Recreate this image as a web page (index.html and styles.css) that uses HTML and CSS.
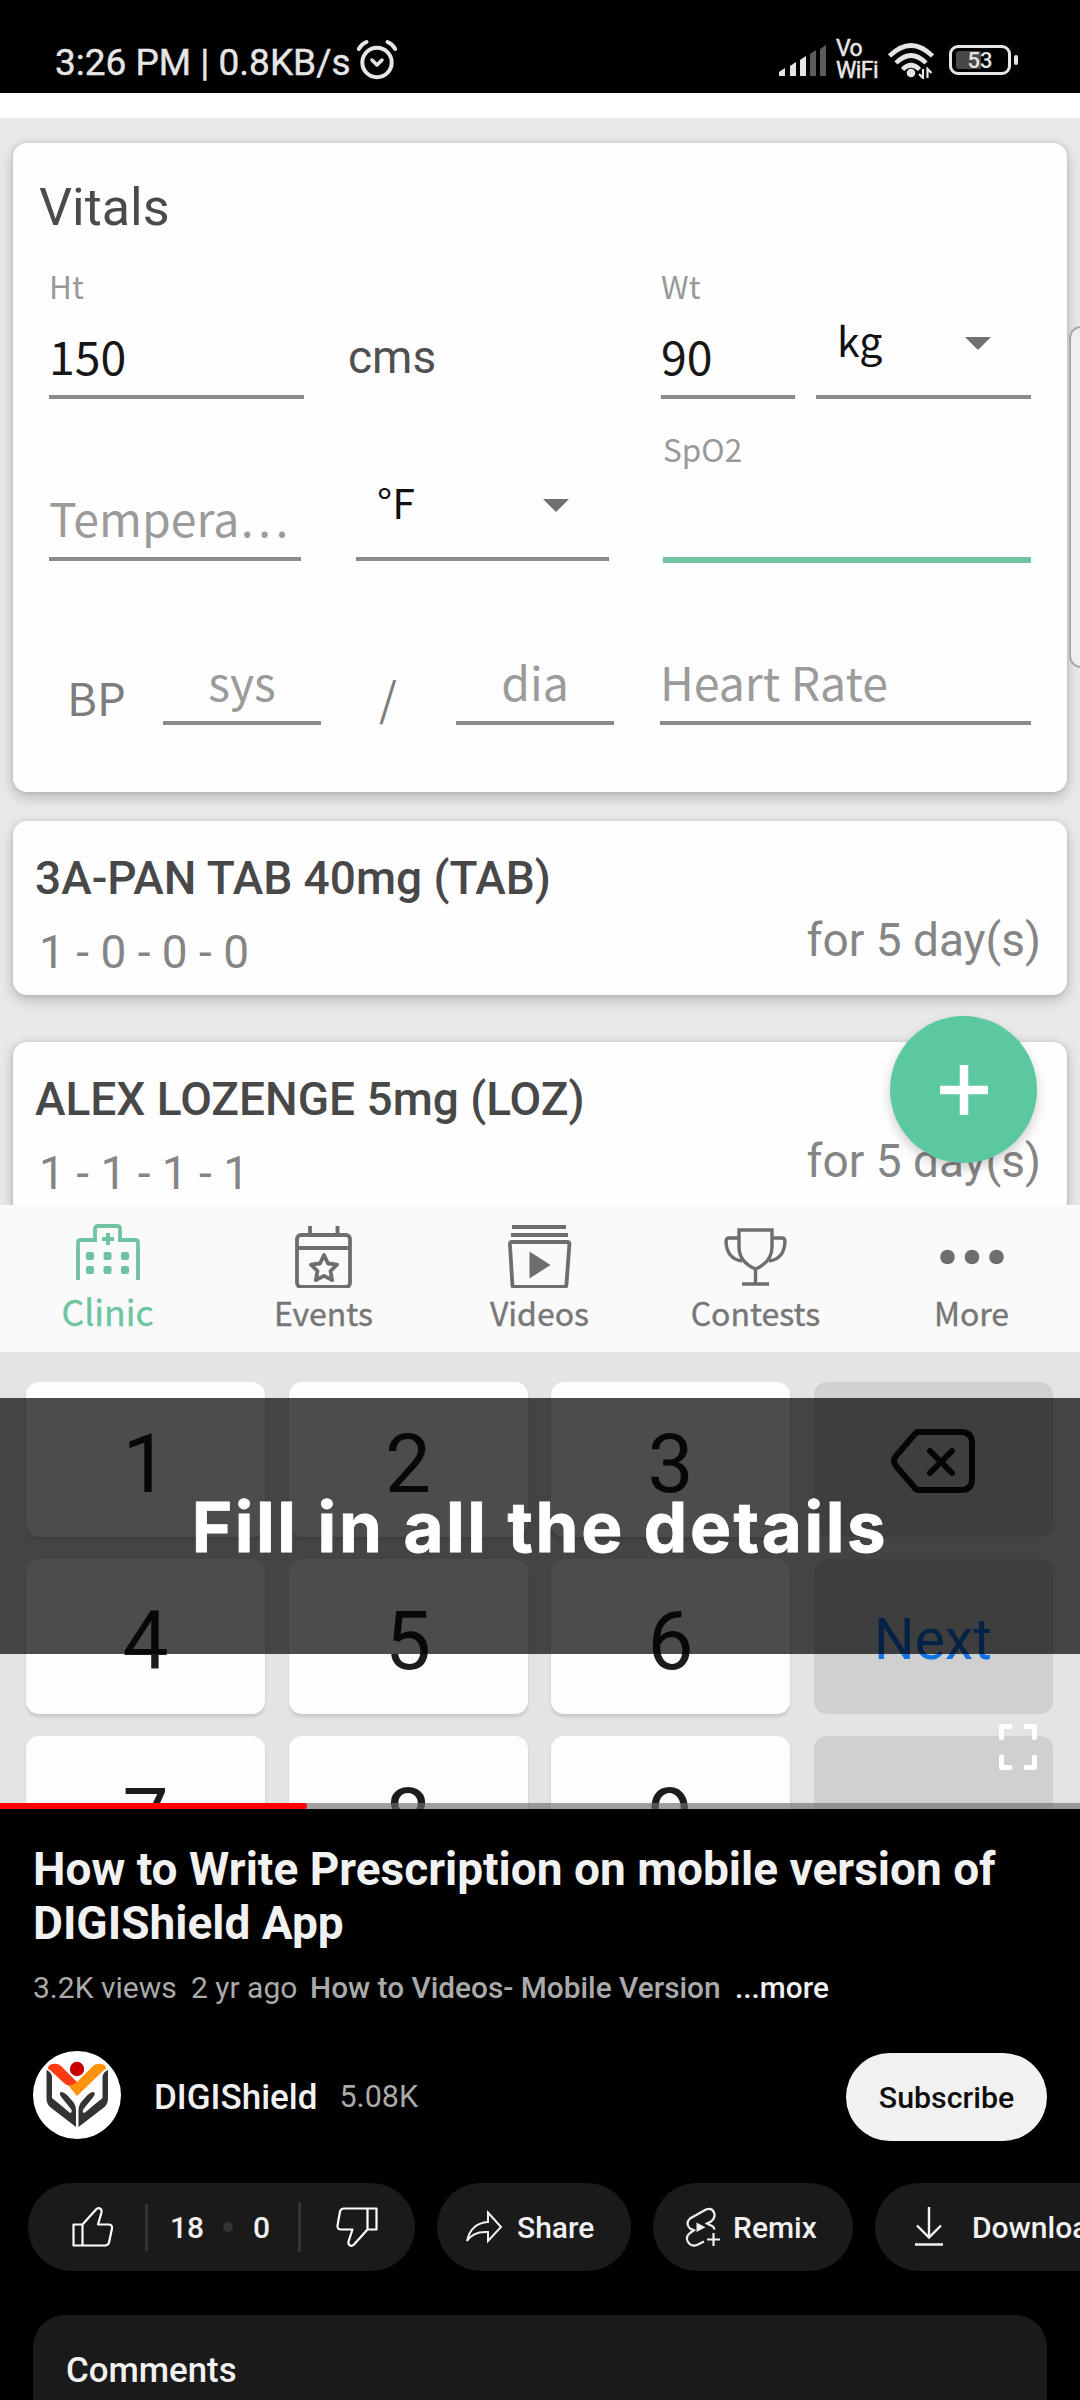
FILE: index.html
```
<!DOCTYPE html>
<html lang="en">
<head>
<meta charset="utf-8">
<title>How to Write Prescription on mobile version of DIGIShield App</title>
<link rel="stylesheet" href="styles.css">
</head>
<body>
<header class="status">
  <span class="status-text">3:26 PM | 0.8KB/s</span>
  <svg class="alarm" width="42" height="42" viewBox="0 0 42 42" fill="none" stroke="#e6e6e6" stroke-linecap="round">
    <circle cx="21" cy="23.500" r="14.700" stroke-width="4"/>
    <path d="M2.800 10Q5.500 5 10.500 3M39.200 10Q36.500 5 31.500 3" stroke-width="4"/>
    <path d="M16 21l5 5 5-5" stroke-width="3.500" stroke-linejoin="round"/>
  </svg>
  <span class="spacer"></span>
  <svg class="signal" width="48" height="32" viewBox="0 0 48 32">
    <g fill="#e6e6e6"><path d="M0 31v-4l6-4v8zM11 31V21l6-4v14zM21 31V15l6-4v20z"/></g>
    <g fill="#5c5c5c"><path d="M31 31V9l6-4v26zM41 31V4l6-4v31z"/></g>
  </svg>
  <span class="vowifi"><span>Vo</span><span>WiFi</span></span>
  <svg class="wifi" width="46" height="36" viewBox="0 0 46 36">
    <g fill="none" stroke="#e6e6e6" stroke-width="4.500"><path d="M1.500 13Q23-8 44.500 13M8 20Q23 5 38 20M14.500 26.500Q23 18 31.500 26.500"/></g>
    <circle cx="23" cy="30" r="4.300" fill="#e6e6e6"/>
    <path d="M35 26v9l-4-4M39.500 35v-9l4 4" fill="none" stroke="#e6e6e6" stroke-width="2.200"/>
  </svg>
  <span class="battery"><span class="battery-level"></span><span class="battery-text">53</span></span>
  <span class="battery-tip"></span>
</header>

<main class="video">
  <div class="screen">
    <section class="card vitals">
      <h2>Vitals</h2>
      <div class="row row-size">
        <div class="field"><label>Ht</label><b>150</b></div>
        <div class="unit">cms</div>
        <div class="field"><label>Wt</label><b>90</b></div>
        <div class="select kg"><span>kg</span><i></i></div>
      </div>
      <div class="row row-temp">
        <div class="field hint"><b>Tempera…</b></div>
        <div class="select"><span>°F</span><i></i></div>
        <div class="field active"><label>SpO2</label><b></b></div>
      </div>
      <div class="row row-bp">
        <div class="bp">BP</div>
        <div class="field hint center"><b>sys</b></div>
        <div class="bp slash">/</div>
        <div class="field hint center"><b>dia</b></div>
        <div class="field hint"><b>Heart Rate</b></div>
      </div>
    </section>
    <section class="card drug">
      <h3>3A-PAN TAB 40mg (TAB)</h3>
      <div class="dose"><span>1 - 0 - 0 - 0</span><span class="days">for 5 day(s)</span></div>
    </section>
    <section class="card drug second">
      <h3>ALEX LOZENGE 5mg (LOZ)</h3>
      <div class="dose"><span>1 - 1 - 1 - 1</span><span class="days">for 5 day(s)</span></div>
    </section>
    <div class="scroll-handle"></div>
    <div class="fab"><svg width="48" height="50" viewBox="0 0 48 50"><path d="M24 0v50M0 25h48" stroke="#fff" stroke-width="8.500"/></svg></div>
  </div>

  <nav class="tabs">
    <div class="tab on">
      <svg width="64" height="64" viewBox="0 0 64 64" fill="none" stroke="#70c3a0" stroke-width="3.800">
        <path d="M2 56V19q0-3 3-3h14V5q0-3 3-3h19q3 0 3 3v11h15q3 0 3 3v37"/>
        <path d="M32 9v12M26 15h12" stroke-width="4"/>
        <g fill="#70c3a0" stroke="none"><rect x="10" y="28" width="8" height="8" rx="2"/><rect x="27.500" y="28" width="8" height="8" rx="2"/><rect x="45" y="28" width="8" height="8" rx="2"/><rect x="10" y="42" width="8" height="8" rx="2"/><rect x="27.500" y="42" width="8" height="8" rx="2"/><rect x="45" y="42" width="8" height="8" rx="2"/></g>
      </svg><span>Clinic</span>
    </div>
    <div class="tab">
      <svg width="64" height="64" viewBox="0 0 64 64" fill="none" stroke="#6e6e6e" stroke-width="3.800" stroke-linejoin="round">
        <rect x="5" y="11" width="53" height="52" rx="4"/><path d="M5 24h53M18 2v9M45.500 2v9"/>
        <path d="M32 31l4 8.500 9 1.200-6.500 6.300 1.600 9.200-8.100-4.400-8.100 4.400 1.600-9.200-6.500-6.300 9-1.200z"/>
      </svg><span>Events</span>
    </div>
    <div class="tab">
      <svg width="64" height="64" viewBox="0 0 64 64" fill="none" stroke="#6e6e6e" stroke-width="3.800" stroke-linejoin="round">
        <path d="M4 3h54M3 11h57"/><path d="M1.900 20q0-2 2-2h55.500q2 0 2 2l-3 41q0 2-2 2h-50q-2 0-2-2z"/>
        <path d="M21.500 27.500v27l21-13.500z" fill="#6e6e6e" stroke="none"/>
      </svg><span>Videos</span>
    </div>
    <div class="tab">
      <svg width="66" height="64" viewBox="0 0 66 64" fill="none" stroke="#6e6e6e" stroke-width="3.400">
        <path d="M16 6h33v17q0 15-16.500 22Q16 38 16 23zM32.500 45v14M19 60h27"/>
        <path d="M16 14H6q-3 0-3 4 1 17 16 19M49 14h10q3 0 3 4-1 17-16 19"/>
      </svg><span>Contests</span>
    </div>
    <div class="tab">
      <svg width="64" height="64" viewBox="0 0 64 64" fill="#6e6e6e"><circle cx="7.500" cy="33" r="7.300"/><circle cx="32" cy="33" r="7.300"/><circle cx="56.500" cy="33" r="7.300"/></svg><span>More</span>
    </div>
  </nav>

  <div class="keyboard">
    <div class="key">1</div><div class="key">2</div><div class="key">3</div>
    <div class="key alt"><svg width="86" height="66" viewBox="0 0 86 66" fill="none" stroke="#111" stroke-width="6" stroke-linecap="round" stroke-linejoin="round"><path d="M29 4h42q11 0 11 11v36q0 11-11 11H29q-3 0-5-3L6 38q-4-5 0-10L24 7q2-3 5-3z"/><path d="M40 23l22 22M62 23L40 45"/></svg></div>
    <div class="key">4</div><div class="key">5</div><div class="key">6</div><div class="key alt next">Next</div>
    <div class="key">7</div><div class="key">8</div><div class="key">9</div><div class="key alt"></div>
  </div>

  <div class="caption">Fill in all the details</div>
  <svg class="fullscreen" width="40" height="48" viewBox="0 0 40 48" fill="none" stroke="#fff" stroke-width="5" stroke-linejoin="round" stroke-linecap="round"><path d="M3.500 14.500V3.500H12M28 3.500h8.500v11M36.500 34v10.500H28M12 44.500H3.500V34"/></svg>
  <div class="progress"><div class="played"></div></div>
</main>

<section class="info">
  <h1>How to Write Prescription on mobile version of DIGIShield App</h1>
  <div class="meta"><span class="views">3.2K views</span><span class="age">2 yr ago</span><strong>How to Videos- Mobile Version</strong><em>...more</em></div>
  <div class="channel">
    <svg class="avatar" width="88" height="88" viewBox="0 0 88 88">
      <circle cx="44" cy="44" r="44" fill="#fff"/>
      <circle cx="44" cy="18" r="7.200" fill="#c90000"/>
      <path d="M15 18q0-4 4-5 6-1 9 2l16 16-4 3q-5 2-9-2L17 19z" fill="#ff3a12"/>
      <path d="M73 18q0-4-4-5-6-1-9 2L44 31q-4 4-9 3l9 11 27-26z" fill="#ff930f"/>
      <path id="hand" d="M13.500 19q5 2 5.500 7v21l11 9 7 6q3-1 1-4l-9-11q-4-5-1-6 3 0 7 4l6 7q2 3 2 8v16L17 56q-3.500-3-3.500-9z" fill="#333"/>
      <use href="#hand" transform="translate(88.500 0) scale(-1 1)"/>
    </svg>
    <span class="name">DIGIShield</span><span class="subs">5.08K</span>
    <span class="spacer"></span>
    <button class="subscribe">Subscribe</button>
  </div>
  <div class="actions">
    <div class="pill votes">
      <svg class="up" width="42" height="42" viewBox="0 0 42 42" fill="none" stroke="#fff" stroke-width="2.200" stroke-linejoin="round"><path d="M1.500 18.500h9v21h-9zM10.500 18.500L24 3.500q2-2 4-1t1.500 4L26 18.500h10.500q4 0 3.500 4l-3 14q-.8 3-4 3H10.500"/></svg>
      <i class="bar"></i><span class="count">18</span><i class="dot"></i><span class="count">0</span><i class="bar tall"></i>
      <svg class="down" width="42" height="42" viewBox="0 0 42 42" fill="none" stroke="#fff" stroke-width="2.200" stroke-linejoin="round"><path d="M40.500 23.500h-9v-21h9zM31.500 23.500L18 38.500q-2 2-4 1t-1.500-4l4-12H5q-4 0-3.500-4l2.500-14q.8-3 4-3h23.500"/></svg>
    </div>
    <div class="pill share">
      <svg width="38" height="36" viewBox="0 0 38 36" fill="none" stroke="#f1f1f1" stroke-width="2"><path d="M23 3.500L36 18 23 32V23Q8 22 2 32 6 14 23 13z"/></svg><span>Share</span>
    </div>
    <div class="pill remix">
      <svg width="38" height="40" viewBox="0 0 38 40" fill="none" stroke="#f1f1f1" stroke-width="2.200"><path d="M19 34.500l-7 3.500q-6 2-9-3t2-9l4-2.800-4-1.700q-5-5 0-10L21 2.500q6-2 8 3t-3 9l-4 2 4 2q3 1 3.500 4"/><path d="M28.500 26v13M22 32.500h13"/><path d="M11.500 15.500v9.500l9-4.700z" fill="#f1f1f1" stroke="none"/></svg><span>Remix</span>
    </div>
    <div class="pill download">
      <svg width="28" height="40" viewBox="0 0 28 40" fill="none" stroke="#f1f1f1" stroke-width="2.400"><path d="M14 0v31M2 18.500l12 12 12-12M0 37.500h28"/></svg><span>Download</span>
    </div>
  </div>
  <div class="comments">Comments</div>
</section>
</body>
</html>
```
FILE: styles.css
```
* { box-sizing: border-box; }
body { margin: 0; width: 1080px; height: 2400px; overflow: hidden; background: #000; color: #f1f1f1; font-family: Roboto, "Liberation Sans", sans-serif; }
h1, h2, h3 { margin: 0; }
svg { display: block; flex: none; }
.spacer { flex: 1; }

.status { display: flex; align-items: flex-start; height: 93px; padding: 40px 62px 0 55px; color: #e6e6e6; }
.status-text { width: 301px; font-size: 37px; line-height: 45px; white-space: nowrap; -webkit-text-stroke: .4px #e6e6e6; }
.alarm { margin-top: -1px; }
.signal { margin: 5px 9px 0 0; }
.vowifi { display: flex; flex-direction: column; width: 43px; margin-top: -2px; font-size: 23px; line-height: 22px; letter-spacing: -.6px; -webkit-text-stroke: .5px #e6e6e6; }
.wifi { margin: 3px 15px 0 9px; }
.battery { position: relative; width: 62px; height: 30px; margin-top: 5px; border: 3px solid #e6e6e6; border-radius: 9px; }
.battery-level { position: absolute; left: 4px; top: 3px; width: 25px; height: 18px; border-radius: 3px 0 0 3px; background: #484848; }
.battery-text { position: absolute; inset: 0; font-size: 22px; line-height: 25px; font-weight: 500; text-align: center; }
.battery-tip { width: 4px; height: 10px; margin: 15px 0 0 3px; border-radius: 2px; background: #e6e6e6; }

.video { position: relative; height: 1716px; overflow: hidden; background: #e9e9e9; }
.screen { position: relative; height: 1112px; overflow: hidden; border-top: 25px solid #fff; padding: 25px 13px 0; color: #505050; }
.card { background: #fefefe; border-radius: 14px; box-shadow: 0 5px 14px rgba(0,0,0,.22), 0 0 4px rgba(0,0,0,.12); }
.vitals { height: 649px; padding: 35px 0 0; font-family: "Noto Sans CJK SC", sans-serif; }
.vitals h2 { padding-left: 26px; font: 400 52px/60px Roboto, sans-serif; color: #4b4b4b; }
.row { display: grid; align-items: end; }
.row-size { height: 135px; margin-top: 26px; padding-left: 36px; grid-template-columns: 255px 357px 134px 21px 215px; }
.row-temp { height: 135px; margin-top: 29px; padding-left: 36px; grid-template-columns: 252px 55px 253px 54px 368px; }
.row-bp { height: 74px; margin-top: 88px; padding-left: 54px; grid-template-columns: 96px 158px 135px 158px 46px 371px; }
.field { border-bottom: 4px solid #8b8b8b; padding: 0 0 10px; color: #171717; white-space: nowrap; }
.field label { display: block; height: 40px; margin-bottom: 20px; font-size: 31.500px; line-height: 40px; color: #999; }
.field b { display: block; height: 60px; font-size: 46.400px; font-weight: 400; line-height: 60px; }
.hint { color: #9b9b9b; }
.row-temp .hint { margin-bottom: 2px; }
.center { text-align: center; }
.unit { padding-left: 44px; margin-bottom: 12px; font: 46px/60px Roboto, sans-serif; }
.select { display: flex; justify-content: space-between; align-items: center; height: 90px; padding: 0 40px 26px 21px; border-bottom: 4px solid #8b8b8b; font-size: 41px; line-height: 60px; color: #111; }
.select i { margin-top: 8px; border: 13px solid transparent; border-top: 13px solid #707070; border-bottom: 0; }
.kg { grid-column: 5; }
.row-temp .select { grid-column: 3; margin-bottom: 2px; }
.active { grid-column: 5; border-bottom: 6px solid #6fc39f; padding-bottom: 9px; }
.bp { font-size: 45.500px; line-height: 60px; color: #7d7d7d; margin-bottom: -1px; }
.slash { padding-left: 58px; }
.row-bp .field:last-child { grid-column: 6; }

.drug { height: 174px; margin-top: 29px; padding: 30px 26px 0 22px; }
.drug.second { margin-top: 47px; }
.drug h3 { font-size: 46px; font-weight: 500; line-height: 54px; color: #484848; }
.dose { display: flex; justify-content: space-between; padding-left: 4px; font-size: 46px; line-height: 50px; color: #858585; }
.dose span { margin-top: 22px; }
.dose .days { margin-top: 10px; }
.scroll-handle { position: absolute; left: 1069px; top: 208px; width: 30px; height: 342px; border: 2px solid #a8a8a8; border-radius: 12px; background: #efefef; }
.fab { position: absolute; left: 890px; top: 898px; display: grid; place-items: center; width: 147px; height: 147px; border-radius: 50%; background: #5cc8a0; box-shadow: 0 5px 12px rgba(0,0,0,.2); }

.tabs { position: relative; display: grid; grid-template-columns: repeat(5, 1fr); height: 147px; background: #fafafa; }
.tab { display: flex; flex-direction: column; align-items: center; padding: 19px 1px 0 0; font-family: "Noto Sans CJK SC", sans-serif; font-size: 32px; color: #777; }
.tab span { line-height: 40px; margin-top: 4px; -webkit-text-stroke: .4px #777; }
.tab.on span { font-size: 35.500px; margin-top: 3px; color: #6fc5a1; -webkit-text-stroke-color: #6fc5a1; }

.keyboard { display: grid; grid-template-columns: repeat(4, 239px); grid-auto-rows: 155px; column-gap: 23.500px; row-gap: 22px; padding: 30px 0 0 26px; height: 457px; overflow: hidden; background: #e4e4e4; }
.key { display: flex; align-items: center; justify-content: center; border-radius: 13px; background: #fdfdfd; box-shadow: 0 3px 3px rgba(0,0,0,.12); padding: 9px 0 0; font-size: 82px; line-height: 146px; color: #1c1c1c; }
.key.alt { background: #d0d0d0; box-shadow: none; padding-top: 2px; }
.key.next { padding: 7px 0 0; font-size: 57px; color: #0f74e6; }
.caption { position: absolute; left: 0; top: 1305px; width: 1080px; height: 256px; background: rgba(0,0,0,.7); color: #fff; font: 700 69px/258px Inter, sans-serif; letter-spacing: 2.600px; text-align: center; -webkit-text-stroke: .8px #fff; }
.fullscreen { position: absolute; left: 998px; top: 1630px; }
.progress { position: absolute; left: 0; bottom: 0; width: 1080px; height: 6px; background: rgba(110,110,110,.65); }
.played { width: 307px; height: 6px; background: #f00; border-radius: 0 3px 3px 0; }

.info { padding: 33px 0 0 33px; }
h1 { width: 1000px; font-size: 46px; font-weight: 700; line-height: 54px; }
.meta { display: flex; margin-top: 18px; font-size: 30px; line-height: 40px; color: #aaa; white-space: nowrap; }
.views { width: 158px; }
.age { width: 119px; }
.meta strong { width: 425px; font-weight: 500; font-size: 29.800px; }
.meta em { font-style: normal; font-weight: 500; font-size: 29.800px; color: #f1f1f1; }
.channel { display: flex; align-items: center; height: 90px; margin-top: 43px; padding-right: 33px; }
.avatar { margin-top: -2px; }
.name { margin: 2px 0 0 33px; font-size: 35px; font-weight: 500; }
.subs { margin: 1px 0 0 22px; font-size: 30.500px; color: #aaa; }
.subscribe { width: 201px; height: 88px; margin-top: 2px; padding: 0; border: 0; border-radius: 44px; background: #f1f1f1; color: #0f0f0f; font: 500 30.300px Roboto, sans-serif; }
.actions { display: flex; gap: 22px; width: 1052px; margin: 42px 0 0 -5px; overflow: hidden; }
.pill { display: flex; align-items: center; height: 88px; border-radius: 44px; background: #1a1a1a; font-size: 30px; font-weight: 500; flex: none; }
.votes { width: 387px; padding-left: 44px; }
.bar { width: 3px; height: 47px; margin-left: 31px; background: #333; }
.count { margin-left: 22px; }
.dot { width: 10px; height: 10px; margin-left: 19px; border-radius: 50%; background: #333; }
.dot + .count { margin-left: 20px; }
.bar.tall { height: 50px; margin-left: 28px; }
.down { margin-left: 35px; }
.share { width: 194px; padding-left: 28px; }
.share span { margin-left: 14px; }
.remix { width: 200px; padding-left: 32px; }
.remix span { margin-left: 10px; }
.download { width: 205px; padding-left: 40px; border-radius: 44px 0 0 44px; overflow: hidden; }
.download span { margin-left: 29px; }
.comments { width: 1014px; height: 140px; margin-top: 44px; padding: 30px 0 0 33px; border-radius: 32px; background: #1a1a1a; font-size: 34.800px; font-weight: 500; line-height: 50px; }
```
